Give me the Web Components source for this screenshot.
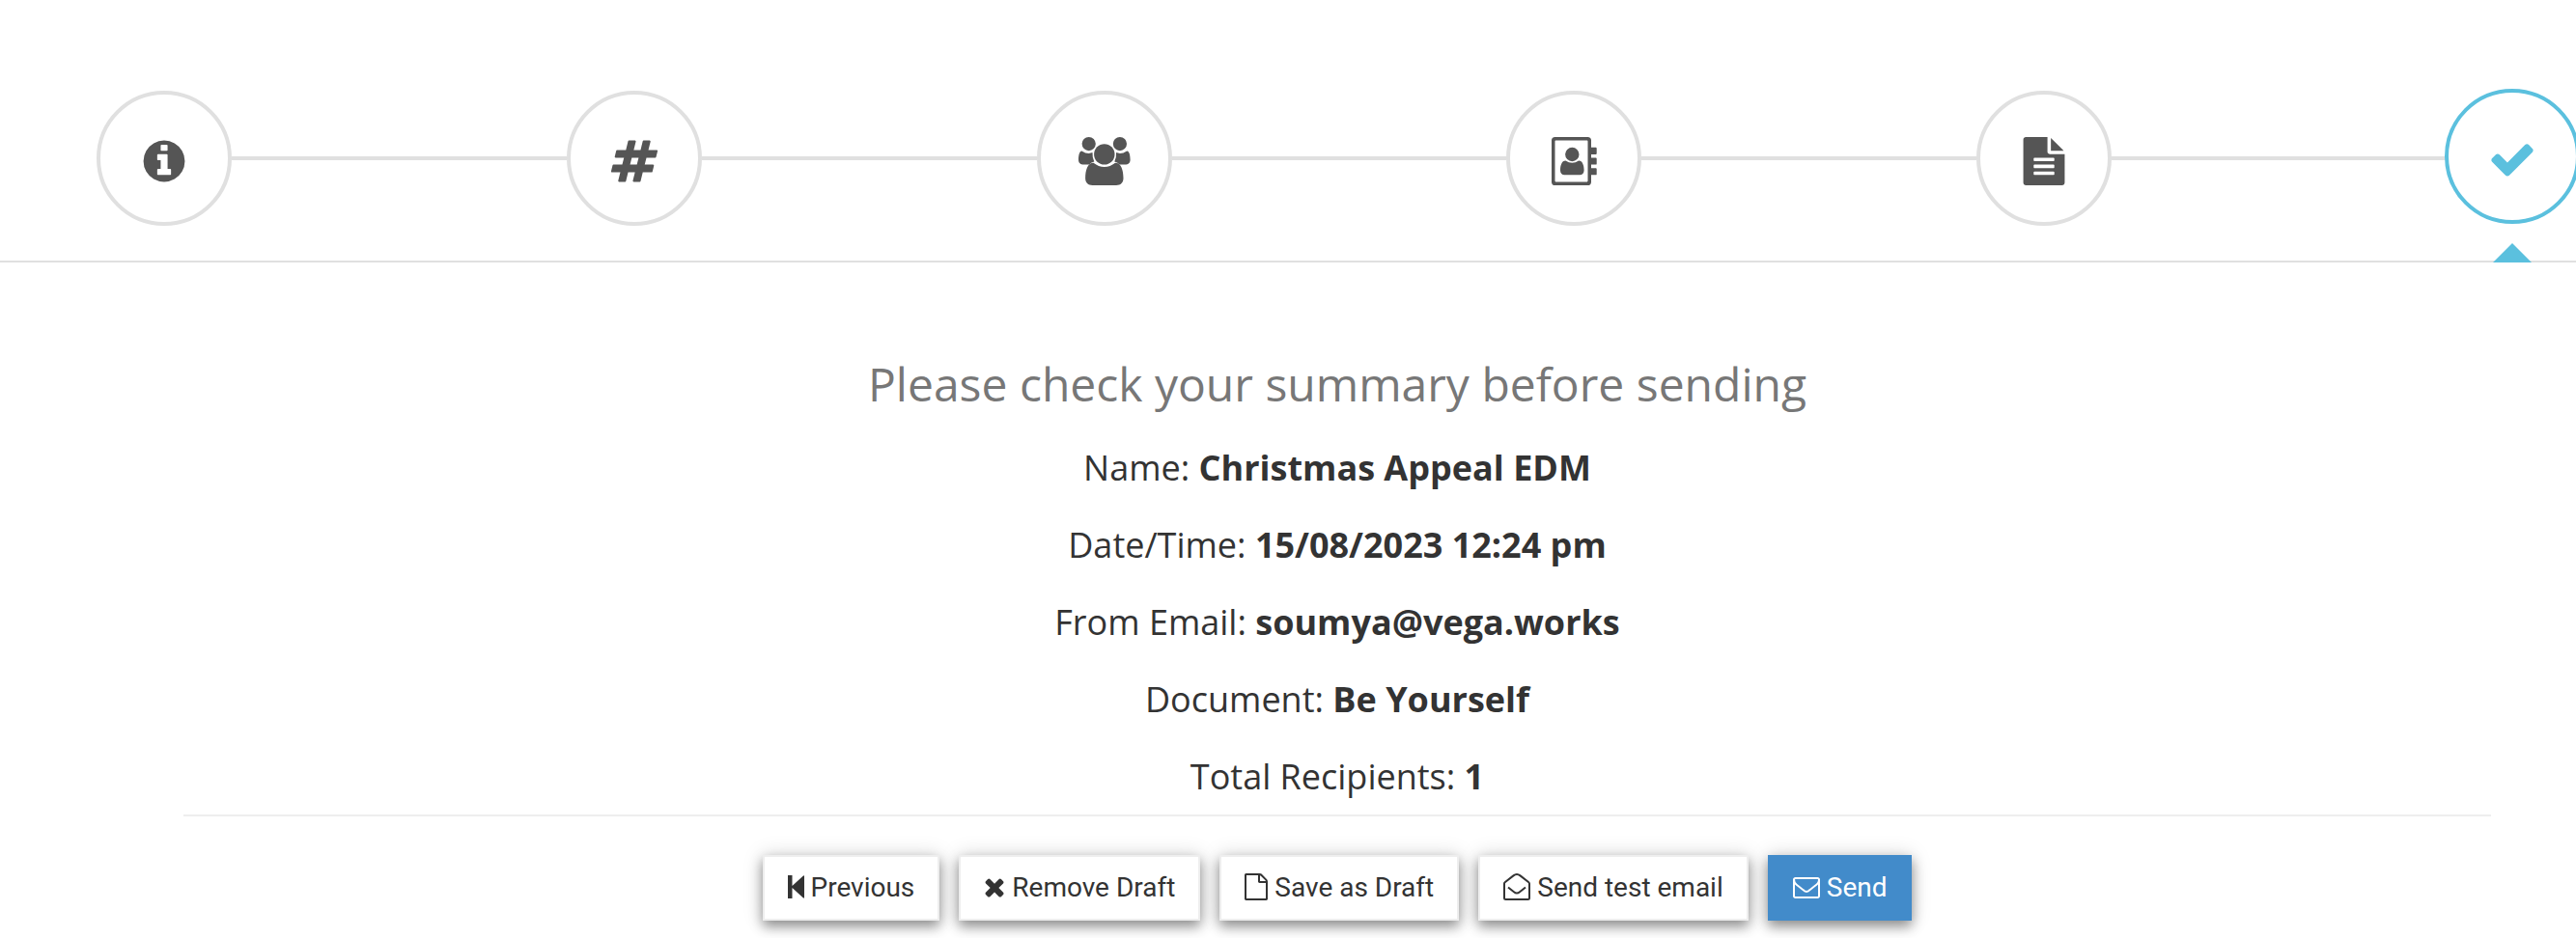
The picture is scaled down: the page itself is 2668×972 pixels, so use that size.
<!DOCTYPE html>
<html lang="en">
<head>
<meta charset="utf-8">
<title>Send summary</title>
<style>
  body { margin: 0; background: #fff; color: #333; font-family: "Open Sans", sans-serif; overflow-x: hidden; }
</style>
</head>
<body>
<edm-wizard></edm-wizard>
<script>
const ICONS = {
  info: ['0 0 1792 1792', '<path d="M1152 1376v-160q0-14-9-23t-23-9h-96v-512q0-14-9-23t-23-9h-320q-14 0-23 9t-9 23v160q0 14 9 23t23 9h96v320h-96q-14 0-23 9t-9 23v160q0 14 9 23t23 9h448q14 0 23-9t9-23zm-128-896v-160q0-14-9-23t-23-9h-192q-14 0-23 9t-9 23v160q0 14 9 23t23 9h192q14 0 23-9t9-23zm640 416q0 209-103 385.5t-279.5 279.5-385.5 103-385.5-103-279.5-279.5-103-385.5 103-385.5 279.5-279.5 385.5-103 385.5 103 279.5 279.5 103 385.5z"/>'],
  hashtag: ['0 0 1792 1792', '<path d="M991 1024l64-256h-254l-64 256h254zm768-504l-56 224q-7 24-31 24h-327l-64 256h311q15 0 25 12 10 14 6 28l-56 224q-5 24-31 24h-327l-81 328q-7 24-31 24h-224q-16 0-26-12-9-12-6-28l78-312h-254l-81 328q-7 24-31 24h-225q-15 0-25-12-9-12-6-28l78-312h-311q-15 0-25-12-9-12-6-28l56-224q7-24 31-24h327l64-256h-311q-15 0-25-12-10-14-6-28l56-224q5-24 31-24h327l81-328q7-24 32-24h224q15 0 25 12 9 12 6 28l-78 312h254l81-328q7-24 32-24h224q15 0 25 12 9 12 6 28l-78 312h311q15 0 25 12 9 12 6 28z"/>'],
  users: ['2 0 50 50', '<circle cx="10.7" cy="7.1" r="7.1"/><circle cx="42.9" cy="7.1" r="7.1"/><circle cx="26.8" cy="17.9" r="10.7"/><path d="M3.4 14.4C1 14.400 0 19 0 23.500C0 27 2.300 28.600 5.400 28.600H11.200Q13.300 26.100 16.300 25.600Q14.200 21.800 14.500 16.100Q12.600 16.900 10.700 16.900Q7.300 16.900 3.400 14.400ZM50.200 14.400C52.600 14.400 53.600 19 53.600 23.500C53.600 27 51.300 28.600 48.200 28.600H42.400Q40.300 26.100 37.300 25.600Q39.400 21.800 39.100 16.100Q41 16.900 42.900 16.900Q46.300 16.900 50.200 14.400Z"/><path d="M15.500 26.800C9.500 26.800 7.100 34.500 7.100 42.500C7.100 47.300 10 50 14.500 50H39.100C43.600 50 46.500 47.300 46.500 42.500C46.500 34.500 44.100 26.800 38.100 26.800Q32.800 31 26.800 31Q20.800 31 15.500 26.800Z"/>'],
  address: ['0 0 50 50', '<path fill-rule="evenodd" d="M5.600 0H39.300Q43 0 43 3.600V46.400Q43 50 39.300 50H5.600Q2 50 2 46.400V3.600Q2 0 5.600 0ZM5.500 4.400V45.600Q5.500 46.400 6.300 46.400H38.700Q39.500 46.400 39.500 45.600V4.400Q39.500 3.600 38.700 3.600H6.300Q5.500 3.600 5.500 4.400Z"/><path d="M43 10.800H47.800Q48.700 10.800 48.700 11.700V17Q48.700 17.900 47.800 17.900H43ZM43 21.500H47.800Q48.700 21.500 48.700 22.400V27.700Q48.700 28.600 47.800 28.600H43ZM43 32.200H47.800Q48.700 32.200 48.700 33.100V38.400Q48.700 39.300 47.800 39.300H43Z"/><circle cx="23.300" cy="18" r="7.200"/><path d="M16.500 24.500C12.500 24.500 11 29.500 11 34.500C11 37.500 12.800 39.300 15.400 39.300H31.200C33.800 39.300 35.600 37.500 35.600 34.500C35.600 29.500 34.100 24.500 30.100 24.500Q26.700 26.700 23.300 26.700Q19.900 26.700 16.500 24.500Z"/>'],
  filetext: ['0 0 1792 1792', '<path d="M1596 476q14 14 28 36h-472v-472q22 14 36 28zm-476 164h544v1056q0 40-28 68t-68 28h-1344q-40 0-68-28t-28-68v-1600q0-40 28-68t68-28h800v544q0 40 28 68t68 28zm160 736v-64q0-14-9-23t-23-9h-704q-14 0-23 9t-9 23v64q0 14 9 23t23 9h704q14 0 23-9t9-23zm0-256v-64q0-14-9-23t-23-9h-704q-14 0-23 9t-9 23v64q0 14 9 23t23 9h704q14 0 23-9t9-23zm0-256v-64q0-14-9-23t-23-9h-704q-14 0-23 9t-9 23v64q0 14 9 23t23 9h704q14 0 23-9t9-23z"/>'],
  check: ['0 0 1792 1792', '<path d="M1671 566q0 40-28 68l-724 724-136 136q-28 28-68 28t-68-28l-136-136-362-362q-28-28-28-68t28-68l136-136q28-28 68-28t68 28l294 295 656-657q28-28 68-28t68 28l136 136q28 28 28 68z"/>'],
  previous: ['0 0 17 24', '<path d="M0 0H4.500V11L16 .5Q17 0 17 1V23Q17 24 16 23.500L4.500 13V24H0Z"/>'],
  remove: ['300 390 1190 1190', '<path d="M1490 1322q0 40-28 68l-136 136q-28 28-68 28t-68-28l-294-294-294 294q-28 28-68 28t-68-28l-136-136q-28-28-28-68t28-68l294-294-294-294q-28-28-28-68t28-68l136-136q28-28 68-28t68 28l294 294 294-294q28-28 68-28t68 28l136 136q28 28 28 68t-28 68l-294 294 294 294q28 28 28 68z"/>'],
  file: ['128 0 1536 1792', '<path d="M1596 380q28 28 48 76t20 88v1152q0 40-28 68t-68 28h-1344q-40 0-68-28t-28-68v-1600q0-40 28-68t68-28h896q40 0 88 20t76 48zm-444-244v376h376q-10-29-22-41l-313-313q-12-12-41-22zm384 1528v-1024h-416q-40 0-68-28t-28-68v-416h-768v1536h1280z"/>'],
  open: ['0 0 28 28', '<path fill="none" stroke="currentColor" stroke-width="2" stroke-linejoin="round" d="M1 10.500Q1 9.800 2 9L10.500 2.400Q14 -.4 17.500 2.400L26 9Q27 9.800 27 10.500V25.500Q27 27 25.500 27H2.500Q1 27 1 25.500ZM5 14.500L11 19.300Q14 21.800 17 19.300L23 14.500"/>'],
  envelope: ['0 256 1792 1408', '<path d="M1664 1504v-768q-32 36-69 66-268 206-426 338-51 43-83 67t-86.5 48.5-102.5 24.5h-2q-48 0-102.5-24.5t-86.5-48.5-83-67q-158-132-426-338-37-30-69-66v768q0 13 9.5 22.500t22.500 9.500h1472q13 0 22.500-9.500t9.500-22.500zm0-1051v-24.500l-.5-13-3-12.500-5.500-9-9-7.500-14-2.500h-1472q-13 0-22.500 9.500t-9.500 22.500q0 168 147 284 193 152 401 317 6 5 35 29.500t46 37.500 44.500 31.500 50.500 27.500 43 9h2q20 0 43-9t50.500-27.500 44.500-31.500 46-37.500 35-29.500q208-165 401-317 54-43 100.500-115.500t46.500-131.500zm128-37v1088q0 66-47 113t-113 47h-1472q-66 0-113-47t-47-113v-1088q0-66 47-113t113-47h1472q66 0 113 47t47 113z"/>']
};

class EdmIcon extends HTMLElement {
  connectedCallback() {
    const [box, shape] = ICONS[this.getAttribute('name')];
    this.attachShadow({ mode: 'open' }).innerHTML = `
      <style>
        :host { display: inline-flex; flex: none; }
        svg { display: block; width: 100%; height: 100%; fill: currentColor; overflow: visible; }
      </style>
      <svg viewBox="${box}" aria-hidden="true">${shape}</svg>`;
  }
}

class EdmStep extends HTMLElement {
  connectedCallback() {
    this.attachShadow({ mode: 'open' }).innerHTML = `
      <style>
        :host { display: flex; flex: 1 1 0; align-items: center; color: #555; }
        :host([last]) { flex: none; }
        a { display: flex; box-sizing: border-box; flex: none; width: 140px; height: 140px; align-items: center;
            justify-content: center; border: 4px solid #e0e0e0; border-radius: 50%; color: inherit; padding-top: 6px; }
        edm-icon { width: 50px; height: 50px; }
        .line { flex: 1; height: 4px; background: #e0e0e0; }
        :host([active]) { position: relative; left: -2px; top: -2px; color: #5bc0de; }
        :host([active]) a { border-color: #5bc0de; }
        :host([last]) .line { display: none; }
        :host([active])::after { content: ""; position: absolute; left: 50px; top: 160px; width: 40px; height: 20px;
            background: #5bc0de; clip-path: polygon(50% 0, 100% 100%, 0 100%); }
      </style>
      <a href="#" aria-label="${this.getAttribute('label')}"><edm-icon name="${this.getAttribute('icon')}"></edm-icon></a>
      <span class="line"></span>`;
  }
}

class EdmSteps extends HTMLElement {
  connectedCallback() {
    this.attachShadow({ mode: 'open' }).innerHTML = `
      <style>
        :host { display: block; border-bottom: 2px solid #e0e0e0; padding: 94px 0 36px 100px; }
        nav { display: flex; margin-right: -6px; }
      </style>
      <nav aria-label="Steps"><slot></slot></nav>`;
  }
}

class EdmField extends HTMLElement {
  connectedCallback() {
    this.attachShadow({ mode: 'open' }).innerHTML = `
      <style>
        :host { display: block; font-size: 36px; line-height: 52px; }
        p { margin: 0; }
      </style>
      <p>${this.getAttribute('label')}: <b><slot></slot></b></p>`;
  }
}

class EdmButton extends HTMLElement {
  connectedCallback() {
    this.attachShadow({ mode: 'open' }).innerHTML = `
      <style>
        :host { display: block; }
        button { display: flex; align-items: center; gap: 7px; height: 68px; padding: 0 24px; border: 2px solid #eee;
          background: #fff; color: #333; font: 28px/40px Roboto, sans-serif; white-space: nowrap;
          box-shadow: 0 6px 12px rgba(0,0,0,.4), 0 0 20px rgba(0,0,0,.15); }
        edm-icon { height: 28px; width: 28px; margin-bottom: 2px; }
        [name=previous] { width: 17px; height: 24px; }
        [name=remove] { width: 22px; height: 19px; margin: 0; }
        [name=file] { width: 24px; }
        [name=envelope] { height: 22px; margin: 0; }
        :host([primary]) button { background: #428bca; border-color: #428bca; color: #fff; }
      </style>
      <button type="button"><edm-icon name="${this.getAttribute('icon')}"></edm-icon><span><slot></slot></span></button>`;
  }
}

class EdmWizard extends HTMLElement {
  connectedCallback() {
    this.attachShadow({ mode: 'open' }).innerHTML = `
      <style>
        :host { display: block; }
        main { padding: 96px 88px 0 190px; text-align: center; }
        h1 { margin: 0; font-size: 48px; line-height: 60px; font-weight: 400; color: #777; }
        .fields { display: grid; gap: 28px; padding: 31px 0 13px; border-bottom: 2px solid #eee; }
        .actions { display: flex; justify-content: center; gap: 20px; padding: 40px 0 18px; }
      </style>
      <edm-steps>
        <edm-step icon="info" label="Details"></edm-step>
        <edm-step icon="hashtag" label="Tags"></edm-step>
        <edm-step icon="users" label="Groups"></edm-step>
        <edm-step icon="address" label="Contacts"></edm-step>
        <edm-step icon="filetext" label="Document"></edm-step>
        <edm-step icon="check" label="Summary" active last></edm-step>
      </edm-steps>
      <main>
        <h1>Please check your summary before sending</h1>
        <div class="fields">
          <edm-field label="Name">Christmas Appeal EDM</edm-field>
          <edm-field label="Date/Time">15/08/2023 12:24 pm</edm-field>
          <edm-field label="From Email">soumya@vega.works</edm-field>
          <edm-field label="Document">Be Yourself</edm-field>
          <edm-field label="Total Recipients">1</edm-field>
        </div>
        <div class="actions">
          <edm-button icon="previous">Previous</edm-button>
          <edm-button icon="remove">Remove Draft</edm-button>
          <edm-button icon="file">Save as Draft</edm-button>
          <edm-button icon="open">Send test email</edm-button>
          <edm-button icon="envelope" primary>Send</edm-button>
        </div>
      </main>`;
  }
}

customElements.define('edm-icon', EdmIcon);
customElements.define('edm-step', EdmStep);
customElements.define('edm-steps', EdmSteps);
customElements.define('edm-field', EdmField);
customElements.define('edm-button', EdmButton);
customElements.define('edm-wizard', EdmWizard);
</script>
</body>
</html>
